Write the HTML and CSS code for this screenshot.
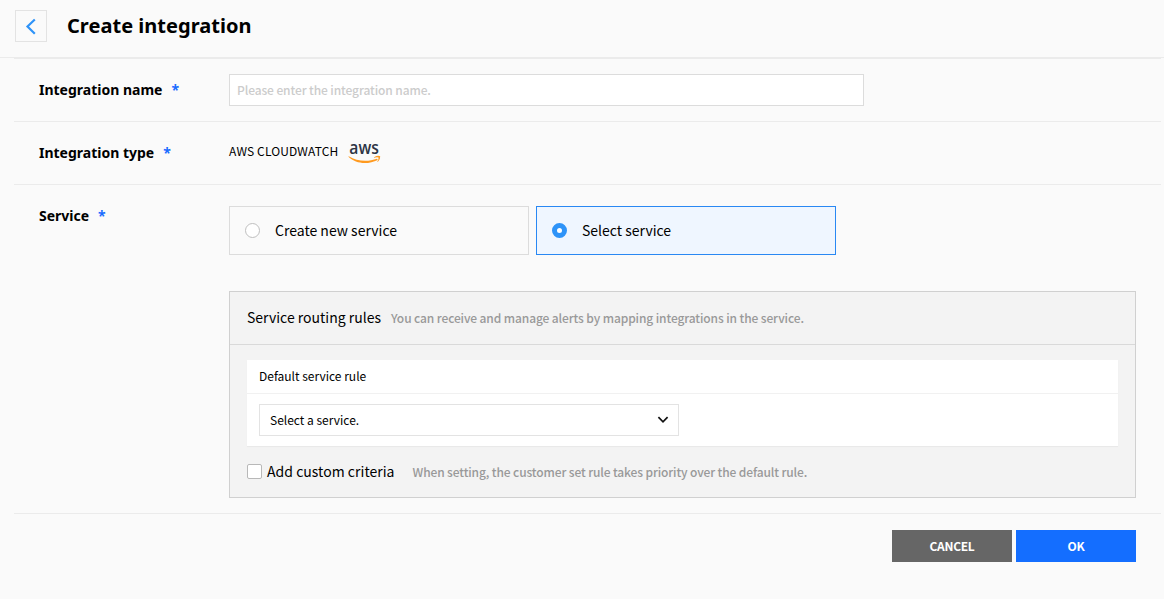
FILE: index.html
```html
<!DOCTYPE html>
<html lang="en">
<head>
<meta charset="utf-8">
<title>Create integration</title>
<link rel="stylesheet" href="styles.css">
</head>
<body>
<header class="page-header">
  <button class="back" aria-label="Back"><svg width="30" height="30" viewBox="0 0 30 30"><path d="M18.8 8.5 11.5 15.5 18.8 22.8" fill="none" stroke="#2e93f8" stroke-width="2.2"/></svg></button>
  <h1 class="title">Create integration</h1>
</header>
<main class="form">
  <section class="row row-name">
    <div class="label"><span class="label-name">Integration name</span><span class="star">*</span></div>
    <div class="name-input"><span class="placeholder">Please enter the integration name.</span></div>
  </section>
  <section class="row row-type">
    <div class="label"><span class="label-type">Integration type</span><span class="star">*</span></div>
    <div class="type"><span class="type-text">AWS CLOUDWATCH</span>
      <svg class="aws" width="34" height="24" viewBox="0 0 34 24"><text class="aws-word" x="1.3" y="11.6" textLength="29.5" lengthAdjust="spacingAndGlyphs">aws</text><path d="M.8 14.2C9 19.6 20 20 29 16.8L29.8 17.9C20 22.8 8 22.1.4 14.8Z" fill="#ff9a1f"/><path d="M26 15.2Q30 12.9 32.2 14.2 32.6 17.2 29.8 20L29.3 19.7Q31 16.8 30.5 15.6 29.2 15 26 15.8Z" fill="#ff9a1f"/></svg>
    </div>
  </section>
  <section class="row row-service">
    <div class="label"><span class="label-service">Service</span><span class="star">*</span></div>
    <div class="service">
      <div class="options">
        <div class="option"><span class="radio"></span><span class="create-text">Create new service</span></div>
        <div class="option selected"><span class="radio"></span><span class="select-text">Select service</span></div>
      </div>
      <div class="panel">
        <div class="panel-head"><span class="rules-title">Service routing rules</span><span class="hint rules-hint">You can receive and manage alerts by mapping integrations in the service.</span></div>
        <div class="panel-body">
          <div class="card">
            <div class="card-head"><span class="default-text">Default service rule</span></div>
            <div class="card-body"><div class="select"><span class="choose-text">Select a service.</span><svg width="12" height="8" viewBox="0 0 12 8"><path d="M1.4 1.2 6 5.8 10.6 1.2" fill="none" stroke="#111" stroke-width="1.7"/></svg></div></div>
          </div>
          <div class="criteria"><span class="checkbox"></span><span class="criteria-text">Add custom criteria</span><span class="hint criteria-hint">When setting, the customer set rule takes priority over the default rule.</span></div>
        </div>
      </div>
    </div>
  </section>
</main>
<footer class="actions"><button class="btn cancel">CANCEL</button><button class="btn ok">OK</button></footer>
</body>
</html>
```
FILE: styles.css
```css
* { box-sizing: border-box; }
body { margin: 0; height: 599px; overflow: hidden; background: #fafafa; color: #000; font: 12px/20px "Noto Sans CJK KR", "Noto Sans", sans-serif; white-space: nowrap; }
button { font: inherit; border: 0; padding: 0; }
.page-header { height: 58px; display: flex; align-items: flex-start; padding: 10px 0 0 15px; border-bottom: 1px solid #ebebeb; }
.back { width: 32px; height: 32px; border: 1px solid #e3e3e3; background: #fafafa; }
.back svg { display: block; }
.title { margin: 0 0 0 20px; font: 700 20px/32px "Noto Sans", sans-serif; letter-spacing: .03px; }
.form { margin: 0 3px 0 14px; border-top: 1px solid #ebebeb; }
.row { display: flex; border-bottom: 1px solid #ebebeb; padding-left: 25px; }
.label { width: 190px; flex: none; display: flex; gap: 9px; font: 700 14px/20px "Noto Sans", sans-serif; }
.star { color: #1a6cff; }
.row-name { height: 63px; padding-top: 15px; }
.row-name .label { padding-top: 6px; }
.name-input { width: 635px; height: 32px; border: 1px solid #dcdcdc; background: #fff; padding: 5px 7px; color: #ccc; font-weight: 500; letter-spacing: -.1px; }
.row-type { height: 63px; padding-top: 20px; }
.row-type .label { padding-top: 1px; }
.type { display: flex; margin-top: -1px; }
.type-text { width: 109px; letter-spacing: .13px; }
.aws { margin: 1px 0 0 10px; overflow: visible; }
.aws-word { font: 600 18px "Open Sans", sans-serif; fill: #2c3444; }
.row-service { height: 329px; padding-top: 21px; }
.service { width: 907px; }
.options { display: flex; gap: 7px; }
.option { width: 300px; height: 49px; border: 1px solid #dcdcdc; display: flex; align-items: center; gap: 15px; padding-left: 15px; font-size: 14px; }
.create-text, .select-text { padding-bottom: 2px; }
.selected { border-color: #2988f3; background: #eff6ff; }
.radio { width: 15px; height: 15px; border: 1px solid #bfbfbf; border-radius: 50%; background: #fff; }
.selected .radio { border: 5px solid #2e93f8; }
.panel { margin-top: 36px; height: 207px; border: 1px solid #d0d0d0; background: #f3f3f3; }
.panel-head { height: 53px; border-bottom: 1px solid #d9d9d9; display: flex; align-items: center; padding: 0 0 2px 17px; gap: 10px; font-size: 14px; }
.hint { color: #999; font-size: 12px; font-weight: 500; letter-spacing: -.11px; padding-top: 1px; }
.panel-body { padding: 15px 17px; }
.card { height: 86px; background: #fff; box-shadow: 0 1px 1px #e9e9e9; }
.card-head { height: 34px; border-bottom: 1px solid #f1f1f1; padding: 6px 12px; }
.card-body { padding: 10px 12px; }
.select { width: 420px; height: 32px; border: 1px solid #e3e3e3; display: flex; align-items: center; justify-content: space-between; padding: 0 9px 0 10px; }
.criteria { display: flex; align-items: center; height: 20px; margin-top: 15px; font-size: 14px; }
.checkbox { width: 15px; height: 15px; border: 1px solid #b8b8b8; border-radius: 2px; background: #fff; margin-right: 5px; }
.criteria-text { letter-spacing: .03px; }
.criteria-hint { margin-left: 18px; padding-top: 2px; letter-spacing: -.12px; }
.actions { display: flex; justify-content: flex-end; gap: 4px; padding: 16px 28px 0 0; }
.btn { width: 120px; height: 32px; color: #fff; font-size: 12px; font-weight: 700; letter-spacing: -.3px; }
.cancel { background: #666; }
.ok { background: #146eff; }
```
